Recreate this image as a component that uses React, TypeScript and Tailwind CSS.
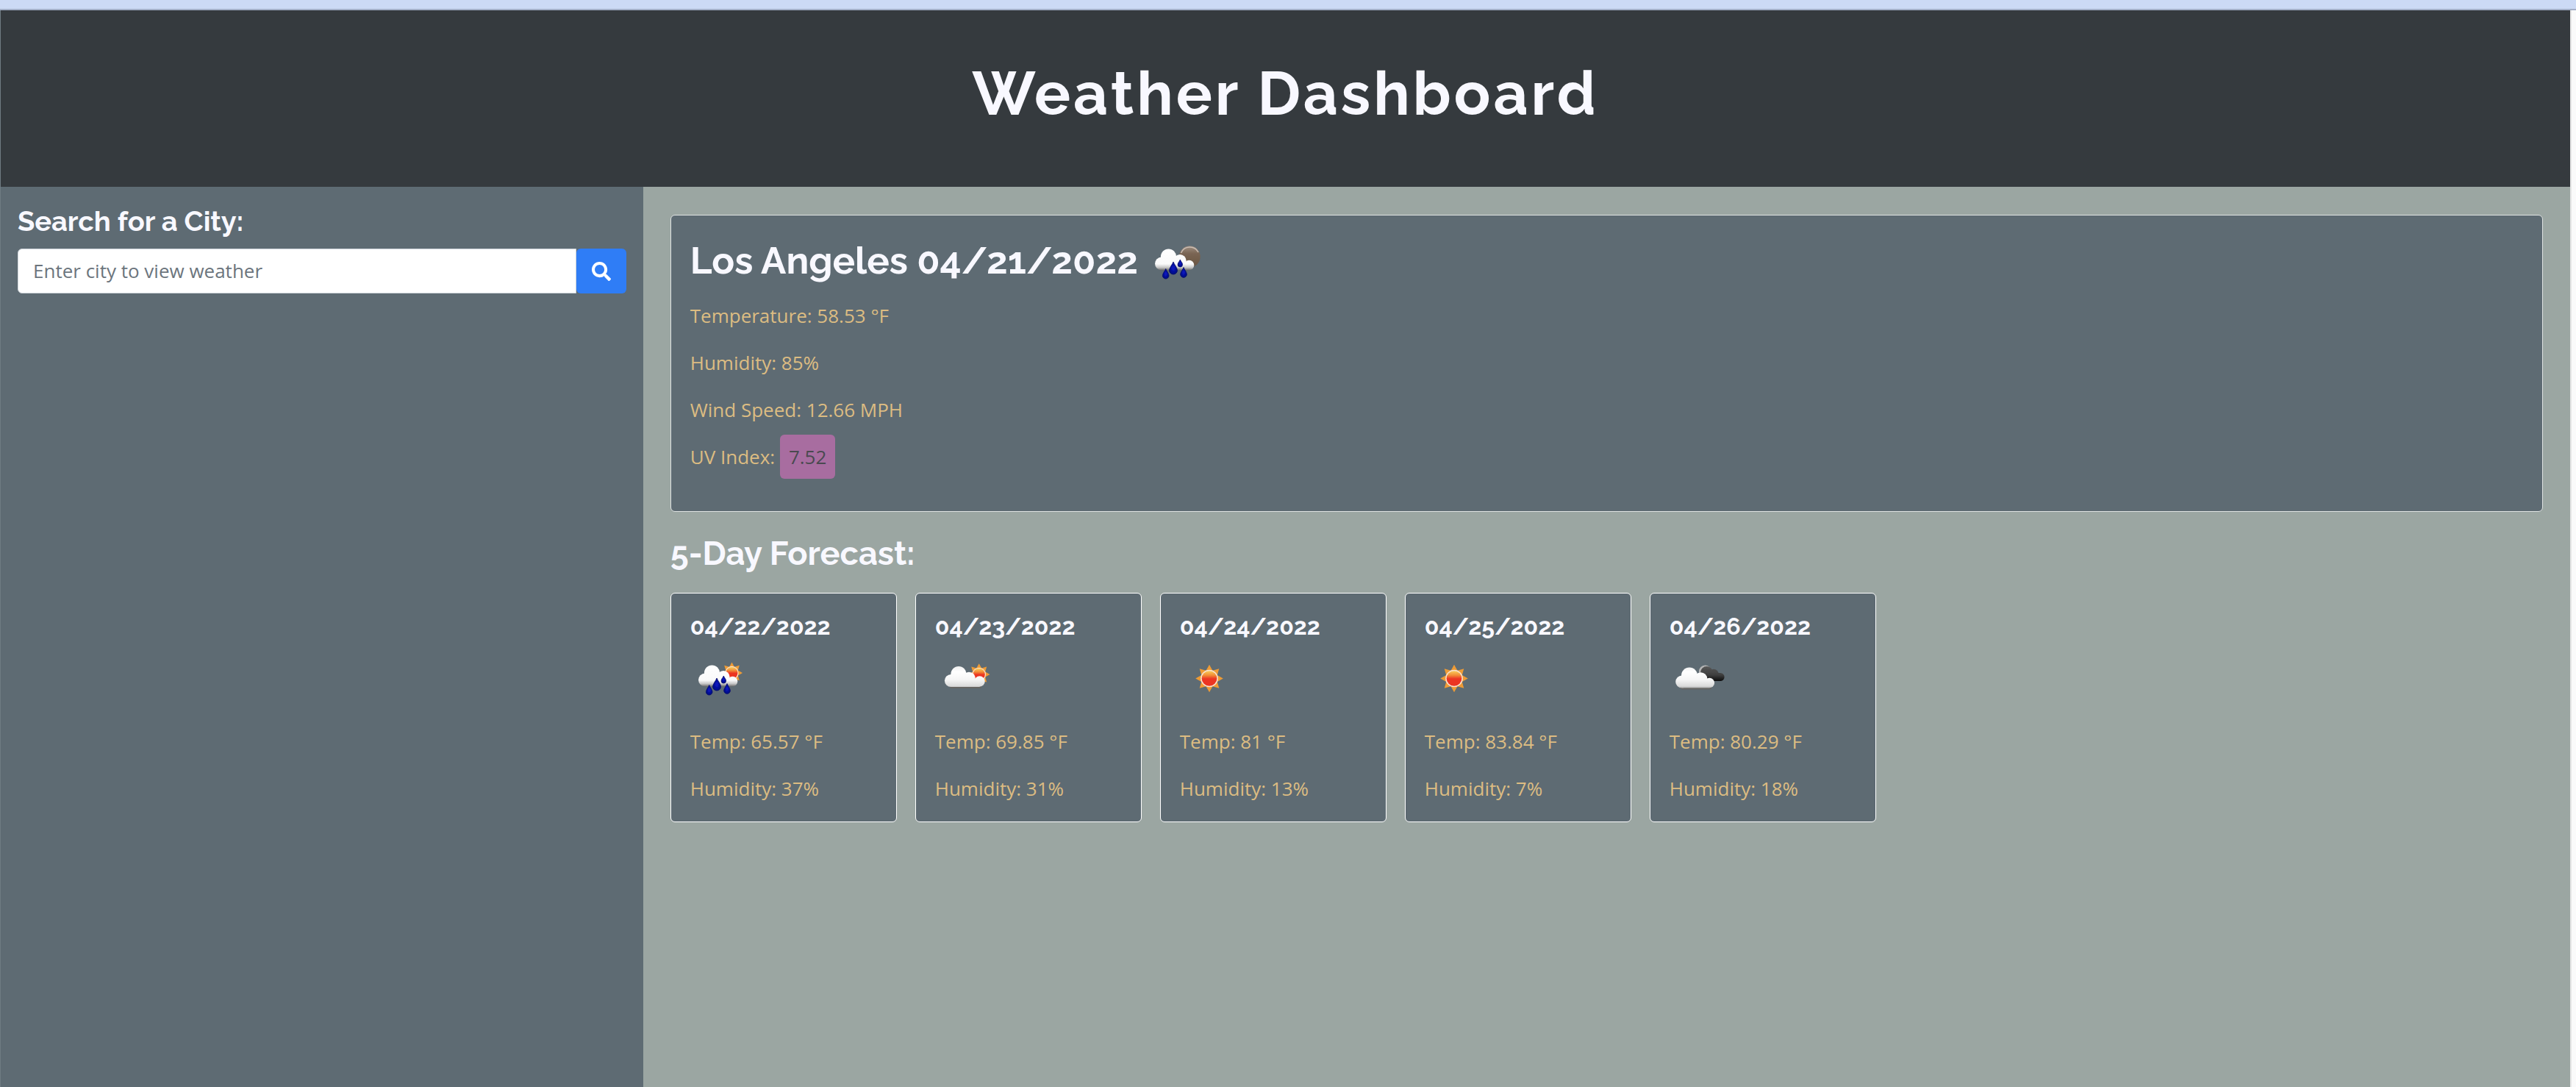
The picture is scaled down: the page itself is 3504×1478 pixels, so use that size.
import type { ReactNode } from "react";
import { FaSearch } from "react-icons/fa";

type Sky = "rain-night" | "rain-day" | "partly" | "clear" | "clouds";
type Circle = [number, number, number];

const forecast: { date: string; sky: Sky; label: string; temp: string; humidity: string }[] = [
  { date: "04/22/2022", sky: "rain-day", label: "Rain", temp: "65.57", humidity: "37" },
  { date: "04/23/2022", sky: "partly", label: "Few clouds", temp: "69.85", humidity: "31" },
  { date: "04/24/2022", sky: "clear", label: "Clear sky", temp: "81", humidity: "13" },
  { date: "04/25/2022", sky: "clear", label: "Clear sky", temp: "83.84", humidity: "7" },
  { date: "04/26/2022", sky: "clouds", label: "Broken clouds", temp: "80.29", humidity: "18" },
];

function Sun({ cx, cy, r }: { cx: number; cy: number; r: number }) {
  const points = Array.from({ length: 16 }, (_, i) => {
    const a = (i * Math.PI) / 8 - Math.PI / 2;
    const d = i % 2 ? r * 0.62 : r;
    return `${cx + d * Math.cos(a)},${cy + d * Math.sin(a)}`;
  }).join(" ");
  return (
    <g>
      <polygon points={points} fill="#ee9b36" />
      <circle cx={cx} cy={cy} r={r * 0.63} fill="#f8e2d0" />
      <circle cx={cx} cy={cy} r={r * 0.55} fill="url(#sun-disc)" />
    </g>
  );
}

function Cloud({ circles, base, fill }: { circles: Circle[]; base: number; fill: string }) {
  const first = circles[0];
  const last = circles[circles.length - 1];
  const top = base - 11;
  return (
    <g fill={fill}>
      {circles.map(([x, y, r]) => (
        <circle key={`${x}-${y}`} cx={x} cy={y} r={r} />
      ))}
      <rect x={first[0]} y={top} width={last[0] - first[0]} height={base - top} />
    </g>
  );
}

function Drop({ x, top, bottom, w }: { x: number; top: number; bottom: number; w: number }) {
  const h = w / 2;
  const c = bottom - h;
  return (
    <path
      d={`M${x} ${top} C${x + 1} ${top + 3} ${x + h} ${c - 3} ${x + h} ${c} A${h} ${h} 0 0 1 ${x - h} ${c} C${x - h} ${c - 3} ${x - 1} ${top + 3} ${x} ${top}Z`}
      fill="url(#drop)"
      stroke="#020a6e"
      strokeWidth="0.8"
    />
  );
}

function RainCloud() {
  return (
    <g>
      <Cloud
        circles={[[20, 41.5, 9], [29.5, 32, 10.6], [45, 37.5, 8.6], [57.5, 43.5, 6.8]]}
        base={50.5}
        fill="url(#cloud)"
      />
      <Drop x={45.3} top={36} bottom={46} w={6.4} />
      <Drop x={36} top={39} bottom={56} w={11} />
      <Drop x={25.7} top={48.5} bottom={62} w={8.6} />
      <Drop x={50} top={46.5} bottom={60.3} w={8.6} />
    </g>
  );
}

function WeatherIcon({ sky, label }: { sky: Sky; label: string }) {
  const art: Record<Sky, ReactNode> = {
    "rain-night": (
      <g>
        <circle cx="58.3" cy="32" r="14.4" fill="url(#moon)" />
        <path d="M46.5 27 A13 13 0 0 1 70 26" fill="none" stroke="#c9bcb2" strokeWidth="1.6" />
        <RainCloud />
      </g>
    ),
    "rain-day": (
      <g>
        <Sun cx={56.5} cy={32} r={14.5} />
        <RainCloud />
      </g>
    ),
    partly: (
      <g>
        <Sun cx={59.7} cy={34} r={14.8} />
        <rect x="20" y="49" width="43" height="4" rx="2" fill="#666563" />
        <Cloud
          circles={[[21.5, 42.5, 8.6], [32, 33.5, 10.6], [46, 39.5, 8.8], [60.5, 43.5, 7.2]]}
          base={51}
          fill="url(#cloud-soft)"
        />
      </g>
    ),
    clear: <Sun cx={40} cy={39.5} r={18.8} />,
    clouds: (
      <g>
        <circle cx="48.5" cy="30" r="8.6" fill="#b5b5b5" />
        <Cloud circles={[[50, 34, 6], [50.5, 31.5, 8.4], [60, 33.5, 6.8], [69, 37.5, 5.6]]} base={43} fill="url(#cloud-dark)" />
        <rect x="15" y="50.5" width="42" height="4" rx="2" fill="#666563" />
        <Cloud
          circles={[[16.8, 44, 8.6], [27, 35.5, 11], [42.5, 40, 8.8], [54.3, 45.5, 6.8]]}
          base={52.4}
          fill="url(#cloud-soft)"
        />
      </g>
    ),
  };
  return (
    <svg viewBox="0 0 80 80" role="img" aria-label={label} className="size-20 shrink-0">
      <g filter="url(#soften)">{art[sky]}</g>
    </svg>
  );
}

function IconPaints() {
  return (
    <svg width="0" height="0" className="absolute" aria-hidden="true">
      <defs>
        <filter id="soften">
          <feGaussianBlur stdDeviation="0.5" />
        </filter>
        <linearGradient id="sun-disc" x1="0" y1="0" x2="0" y2="1">
          <stop offset="0" stopColor="#f8cf5c" />
          <stop offset="0.3" stopColor="#f28a35" />
          <stop offset="0.52" stopColor="#ec3524" />
          <stop offset="1" stopColor="#ec3524" />
        </linearGradient>
        <linearGradient id="moon" x1="0" y1="0" x2="0" y2="1">
          <stop offset="0" stopColor="#a08f82" />
          <stop offset="0.35" stopColor="#7a6553" />
          <stop offset="1" stopColor="#685442" />
        </linearGradient>
        <linearGradient id="cloud" gradientUnits="userSpaceOnUse" x1="0" y1="21" x2="0" y2="51">
          <stop offset="0" stopColor="#ffffff" />
          <stop offset="0.7" stopColor="#fafafa" />
          <stop offset="0.86" stopColor="#c4c4c4" />
          <stop offset="1" stopColor="#5c5c5c" />
        </linearGradient>
        <linearGradient id="cloud-soft" gradientUnits="userSpaceOnUse" x1="0" y1="23" x2="0" y2="53">
          <stop offset="0" stopColor="#f0f0f0" />
          <stop offset="0.25" stopColor="#ffffff" />
          <stop offset="0.6" stopColor="#f6f6f6" />
          <stop offset="0.9" stopColor="#dadada" />
          <stop offset="1" stopColor="#a0a0a0" />
        </linearGradient>
        <linearGradient id="cloud-dark" gradientUnits="userSpaceOnUse" x1="0" y1="22" x2="0" y2="43">
          <stop offset="0" stopColor="#5a5a5a" />
          <stop offset="0.6" stopColor="#3f3f3f" />
          <stop offset="1" stopColor="#0c0c0c" />
        </linearGradient>
        <radialGradient id="drop">
          <stop offset="0" stopColor="#0a18c8" />
          <stop offset="1" stopColor="#020a80" />
        </radialGradient>
      </defs>
    </svg>
  );
}

export default function App() {
  return (
    <div className="flex min-h-screen flex-col bg-[#9ba6a2] font-['Open_Sans',sans-serif] text-[26px] leading-[38px] text-[#dcbc82]">
      <IconPaints />
      <div className="h-[14px] border-b-2 border-[#a4b0c8] bg-[#ccdaf5]" />
      <div className="flex grow border-r-6 border-[#fafafa]">
        <div className="flex grow flex-col border-r-2 border-l border-r-[#e6e6e6] border-l-[#6f7b82]">
          <header className="flex h-60 justify-center bg-[#353a3e] pt-16">
            <h1 className="font-['Raleway',Lato,sans-serif] text-[82px] leading-[98px] font-bold tracking-[4px] text-[#f8f8ff]">
              Weather Dashboard
            </h1>
          </header>
          <div className="flex grow">
            <aside className="w-1/4 shrink-0 bg-[#5e6b73] px-[23px] pt-6">
              <form onSubmit={(e) => e.preventDefault()}>
                <label
                  htmlFor="city"
                  className="block font-['Raleway',Lato,sans-serif] text-[38px] leading-[46px] font-bold text-[#f8f8ff]"
                >
                  Search for a City:
                </label>
                <div className="mt-[14px] flex h-[61px]">
                  <input
                    id="city"
                    type="text"
                    placeholder="Enter city to view weather"
                    className="min-w-0 grow rounded-l-md border border-[#ced4da] bg-white px-5 pb-px text-[#495057] placeholder:text-[#6c757d] placeholder:opacity-100"
                  />
                  <button
                    type="submit"
                    aria-label="Search"
                    className="flex w-[68px] items-center justify-center rounded-md bg-[#2f7df6] text-white"
                  >
                    <FaSearch className="size-[26px]" />
                  </button>
                </div>
              </form>
            </aside>
            <main className="min-w-0 grow px-[37px] pt-[38px]">
              <section className="h-[404px] rounded-md border border-[#dfe3e2] bg-[#5e6b73] px-[26px] pt-6">
                <div className="flex items-start gap-3">
                  <h2 className="font-['Raleway',Lato,sans-serif] text-[51px] leading-[74px] font-bold text-[#f8f8ff]">
                    Los Angeles 04/21/2022
                  </h2>
                  <WeatherIcon sky="rain-night" label="Rain" />
                </div>
                <div className="mt-[13px] flex flex-col gap-[26px]">
                  <p>Temperature: 58.53 °F</p>
                  <p>Humidity: 85%</p>
                  <p>Wind Speed: 12.66 MPH</p>
                  <p>
                    UV Index: <span className="rounded-md bg-[#a86da0] px-3 py-3 text-[#4a4a50]">7.52</span>
                  </p>
                </div>
              </section>
              <h2 className="mt-[30px] font-['Raleway',Lato,sans-serif] text-[45px] leading-[54px] font-bold text-[#f8f8ff]">
                5-Day Forecast:
              </h2>
              <div className="mt-[26px] flex flex-wrap gap-[25px]">
                {forecast.map((day) => (
                  <article key={day.date} className="w-[308px] rounded-md border border-white bg-[#5e6b73] p-[26px]">
                    <h3 className="font-['Raleway',Lato,sans-serif] text-[32px] leading-[38px] font-bold text-[#f8f8ff]">
                      {day.date}
                    </h3>
                    <div className="mt-3">
                      <WeatherIcon sky={day.sky} label={day.label} />
                    </div>
                    <p className="mt-[26px]">Temp: {day.temp} °F</p>
                    <p className="mt-[26px]">Humidity: {day.humidity}%</p>
                  </article>
                ))}
              </div>
            </main>
          </div>
        </div>
      </div>
    </div>
  );
}
